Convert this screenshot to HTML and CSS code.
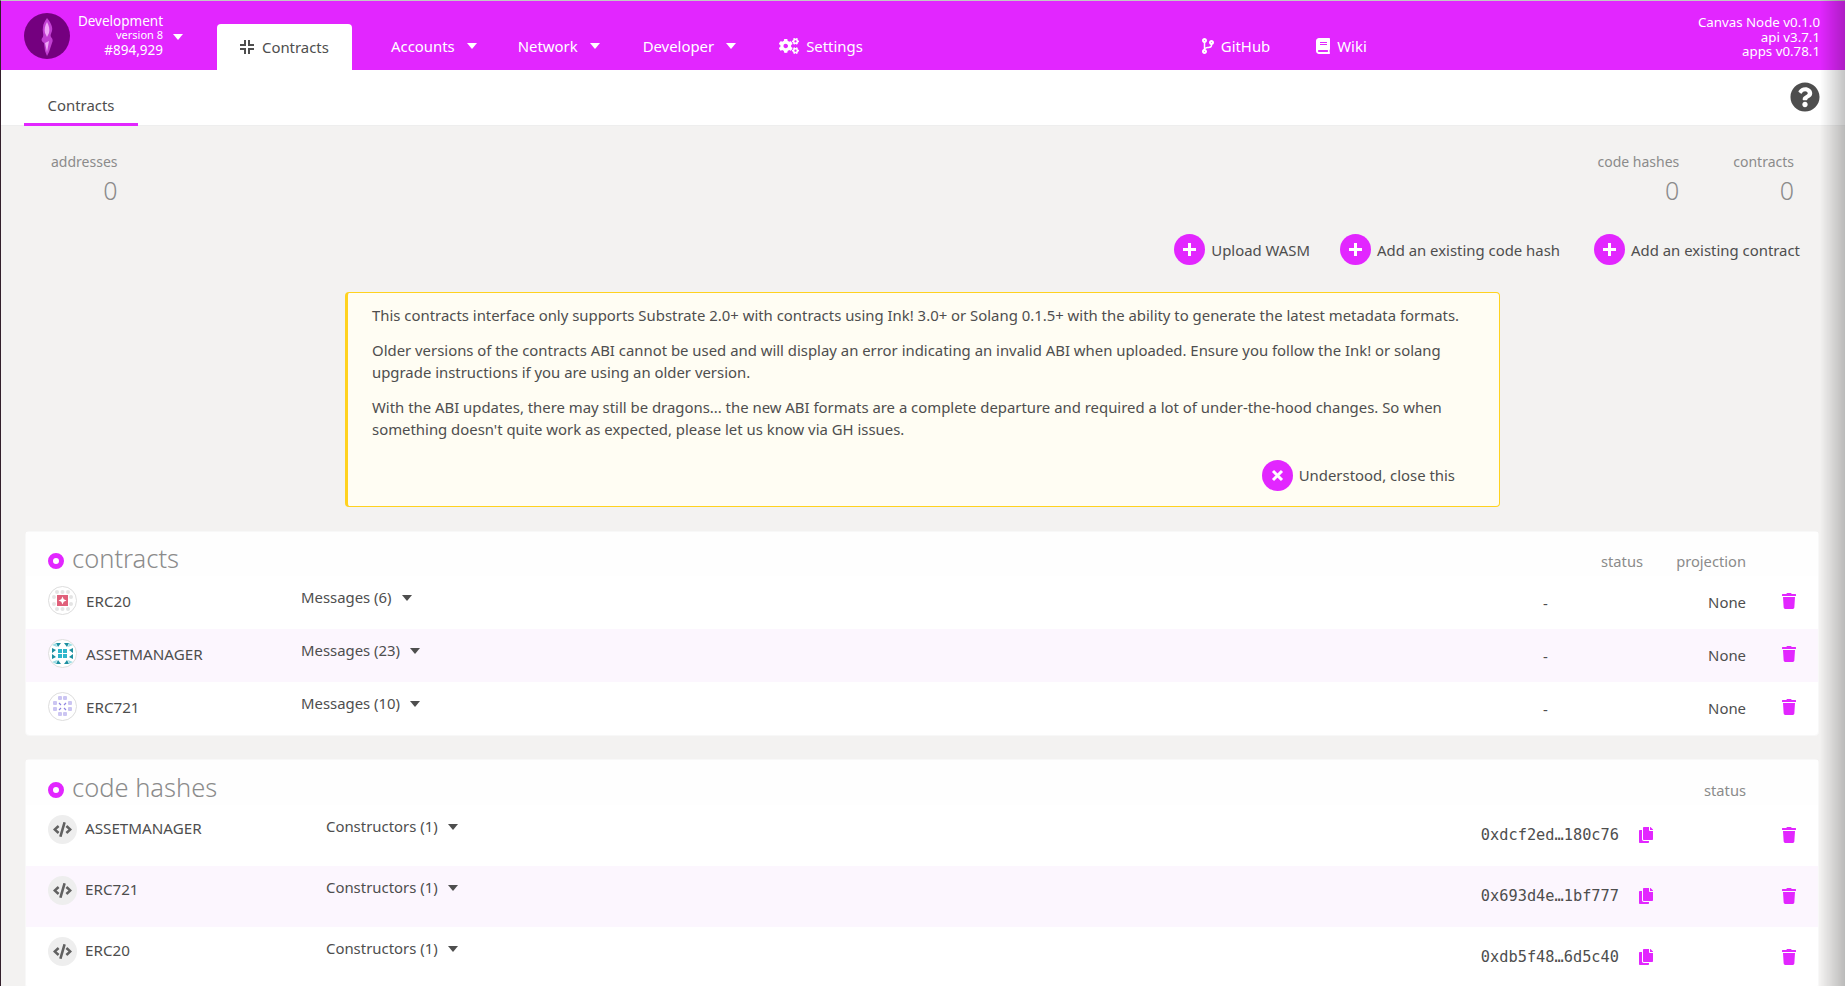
FILE: index.html
```html
<!DOCTYPE html>
<html>
<head>
    <title>Contracts</title>
    <link rel="stylesheet" href="styles.css">
</head>
<body>
    <svg class="icon-defs" xmlns="http://www.w3.org/2000/svg">
        <symbol id="i-trash" viewBox="0 0 448 512"><path d="M432 32H312l-9.4-18.7A24 24 0 0 0 281.1 0H166.8a23.72 23.72 0 0 0-21.4 13.3L136 32H16A16 16 0 0 0 0 48v32a16 16 0 0 0 16 16h416a16 16 0 0 0 16-16V48a16 16 0 0 0-16-16zM53.2 467a48 48 0 0 0 47.9 45h245.8a48 48 0 0 0 47.9-45L416 128H32z"/></symbol>
        <symbol id="i-copy" viewBox="0 0 448 512"><path d="M320 448v40c0 13.255-10.745 24-24 24H24c-13.255 0-24-10.745-24-24V120c0-13.255 10.745-24 24-24h72v296c0 30.879 25.121 56 56 56h168zm0-344V0H152c-13.255 0-24 10.745-24 24v368c0 13.255 10.745 24 24 24h272c13.255 0 24-10.745 24-24V128H344c-13.2 0-24-10.8-24-24zm120.971-31.029L375.029 7.029A24 24 0 0 0 358.059 0H352v96h96v-6.059a24 24 0 0 0-7.029-16.97z"/></symbol>
        <symbol id="i-code" viewBox="0 0 640 512"><path d="M278.9 511.5l-61-17.7c-6.4-1.8-10-8.5-8.2-14.9L346.2 8.7c1.8-6.4 8.5-10 14.9-8.2l61 17.7c6.4 1.8 10 8.5 8.2 14.9L293.8 503.3c-1.9 6.4-8.5 10.1-14.9 8.2zm-114-112.2l43.5-46.4c4.6-4.9 4.3-12.7-.8-17.2L117 256l90.6-79.7c5.1-4.5 5.5-12.3.8-17.2l-43.5-46.4c-4.5-4.8-12.1-5.1-17-.5L3.8 247.2c-5.1 4.7-5.1 12.8 0 17.5l144.1 135.1c4.9 4.6 12.5 4.4 17-.5zm327.2.6l144.1-135.1c5.1-4.7 5.1-12.8 0-17.5L492.1 112.1c-4.8-4.5-12.4-4.3-17 .5L431.6 159c-4.6 4.9-4.3 12.7.8 17.2L523 256l-90.6 79.7c-5.1 4.5-5.5 12.3-.8 17.2l43.5 46.4c4.5 4.9 12.1 5.1 17 .6z"/></symbol>
    </svg>

    <header class="topbar">
        <div class="chain">
            <svg class="chain-logo" viewBox="0 0 46 46">
                <circle cx="23" cy="23" r="23" fill="#74007f"/>
                <path d="M23 5c4 5 6 9 5 13-1 3-2 4-1 6 2 2 2 4 1 6l-3 9-2 4-2-5-1-8c-3-2-3-4-1-6 1-3-1-6 0-10 0-3 2-6 4-9z" fill="#c13fd2"/>
                <path d="M23 9c2 4 3 7 2 11l-2 4-2-4c-1-4 0-7 2-11zM21 30l4-2-2 11z" fill="#f0a8f8"/>
            </svg>
            <div class="chain-info">
                <div>Development</div>
                <div class="chain-version">version 8</div>
                <div>#894,929</div>
            </div>
            <span class="caret caret-light chain-caret"></span>
        </div>

        <nav class="nav">
            <a class="nav-tab">
                <svg class="nav-tab-icon" viewBox="0 0 14 14"><path d="M0 5h5V0M9 0v5h5M14 9H9v5M5 14V9H0" fill="none" stroke="#4e4e4e" stroke-width="2"/></svg>
                Contracts
            </a>
            <a class="nav-item nav-accounts">Accounts<span class="caret caret-light"></span></a>
            <a class="nav-item nav-network">Network<span class="caret caret-light"></span></a>
            <a class="nav-item nav-developer">Developer<span class="caret caret-light"></span></a>
            <a class="nav-item nav-settings">
                <svg class="nav-icon cogs" viewBox="0 0 640 512"><path d="M512.1 191l-8.2 14.3c-3 5.3-9.4 7.5-15.1 5.4-11.8-4.4-22.6-10.7-32.1-18.6-4.6-3.8-5.8-10.5-2.8-15.7l8.2-14.3c-6.9-8-12.3-17.3-15.9-27.4h-16.5c-6 0-11.2-4.3-12.2-10.3-2-12-2.1-24.6 0-37.1 1-6 6.2-10.4 12.2-10.4h16.5c3.6-10.1 9-19.4 15.9-27.4l-8.2-14.3c-3-5.2-1.9-11.9 2.8-15.7 9.5-7.9 20.4-14.2 32.1-18.6 5.7-2.1 12.1.1 15.1 5.4l8.2 14.3c10.5-1.9 21.2-1.9 31.7 0L552 6.3c3-5.3 9.4-7.5 15.1-5.4 11.8 4.4 22.6 10.7 32.1 18.6 4.6 3.8 5.8 10.5 2.8 15.7l-8.2 14.3c6.9 8 12.3 17.3 15.9 27.4h16.5c6 0 11.2 4.3 12.2 10.3 2 12 2.1 24.6 0 37.1-1 6-6.2 10.4-12.2 10.4h-16.5c-3.6 10.1-9 19.4-15.9 27.4l8.2 14.3c3 5.2 1.9 11.9-2.8 15.7-9.5 7.9-20.4 14.2-32.1 18.6-5.7 2.1-12.1-.1-15.1-5.4l-8.2-14.3c-10.4 1.9-21.2 1.9-31.7 0zm-10.5-58.8c38.5 29.6 82.4-14.3 52.8-52.8-38.5-29.7-82.4 14.3-52.8 52.8zM386.3 286.1l33.7 16.8c10.1 5.8 14.5 18.1 10.5 29.1-8.9 24.2-26.4 46.4-42.6 65.8-7.4 8.9-20.2 11.1-30.3 5.3l-29.1-16.8c-16 13.7-34.6 24.6-54.9 31.7v33.6c0 11.6-8.3 21.6-19.7 23.6-24.6 4.2-50.4 4.4-75.9 0-11.5-2-20-11.9-20-23.6V418c-20.3-7.2-38.9-18-54.9-31.7L74 403c-10 5.8-22.9 3.6-30.3-5.3-16.2-19.4-33.3-41.6-42.2-65.7-4-10.9.4-23.2 10.5-29.1l33.3-16.8c-3.9-20.9-3.9-42.4 0-63.4L12 205.8c-10.1-5.8-14.6-18.1-10.5-29 8.9-24.2 26-46.4 42.2-65.8 7.4-8.9 20.2-11.1 30.3-5.3l29.1 16.8c16-13.7 34.6-24.6 54.9-31.7V57.1c0-11.5 8.2-21.5 19.6-23.5 24.6-4.2 50.5-4.4 76-.1 11.5 2 20 11.9 20 23.6v33.6c20.3 7.2 38.9 18 54.9 31.7l29.1-16.8c10-5.8 22.9-3.6 30.3 5.3 16.2 19.4 33.2 41.6 42.1 65.8 4 10.9.1 23.2-10 29.1l-33.7 16.8c3.9 21 3.9 42.5 0 63.5zm-117.6 21.1c59.2-77-28.7-164.9-105.7-105.7-59.2 77 28.7 164.9 105.7 105.7zm243.4 182.7l-8.2 14.3c-3 5.3-9.4 7.5-15.1 5.4-11.8-4.4-22.6-10.7-32.1-18.6-4.6-3.8-5.8-10.5-2.8-15.7l8.2-14.3c-6.9-8-12.3-17.3-15.9-27.4h-16.5c-6 0-11.2-4.3-12.2-10.3-2-12-2.1-24.6 0-37.1 1-6 6.2-10.4 12.2-10.4h16.5c3.6-10.1 9-19.4 15.9-27.4l-8.2-14.3c-3-5.2-1.9-11.9 2.8-15.7 9.5-7.9 20.4-14.2 32.1-18.6 5.7-2.1 12.1.1 15.1 5.4l8.2 14.3c10.5-1.9 21.2-1.9 31.7 0l8.2-14.3c3-5.3 9.4-7.5 15.1-5.4 11.8 4.4 22.6 10.7 32.1 18.6 4.6 3.8 5.8 10.5 2.8 15.7l-8.2 14.3c6.9 8 12.3 17.3 15.9 27.4h16.5c6 0 11.2 4.3 12.2 10.3 2 12 2.1 24.6 0 37.1-1 6-6.2 10.4-12.2 10.4h-16.5c-3.6 10.1-9 19.4-15.9 27.4l8.2 14.3c3 5.2 1.9 11.9-2.8 15.7-9.5 7.9-20.4 14.2-32.1 18.6-5.7 2.1-12.1-.1-15.1-5.4l-8.2-14.3c-10.4 1.9-21.2 1.9-31.7 0zM501.6 431c38.5 29.6 82.4-14.3 52.8-52.8-38.5-29.6-82.4 14.3-52.8 52.8z"/></svg>
                Settings
            </a>
            <a class="nav-item nav-github">
                <svg class="nav-icon branch" viewBox="0 0 384 512"><path d="M384 144c0-44.2-35.8-80-80-80s-80 35.8-80 80c0 36.4 24.3 67.1 57.5 76.8-.6 16.1-4.2 28.5-11 36.9-15.4 19.2-49.3 22.4-85.2 25.7-28.2 2.6-57.4 5.4-81.3 16.9v-144c32.5-10.2 56-40.5 56-76.3 0-44.2-35.8-80-80-80S0 35.8 0 80c0 35.8 23.5 66.1 56 76.3v199.3C23.5 365.9 0 396.2 0 432c0 44.2 35.8 80 80 80s80-35.8 80-80c0-34-21.2-63.1-51.2-74.6 3.1-5.2 7.8-9.8 14.9-13.4 16.2-8.2 40.4-10.4 66.1-12.8 42.2-3.9 90-8.4 118.2-43.4 14-17.4 21.1-39.8 21.6-67.9 31.6-10.8 54.4-40.7 54.4-75.9zM80 64c8.8 0 16 7.2 16 16s-7.2 16-16 16-16-7.2-16-16 7.2-16 16-16zm0 384c-8.8 0-16-7.2-16-16s7.2-16 16-16 16 7.2 16 16-7.2 16-16 16zm224-320c8.8 0 16 7.2 16 16s-7.2 16-16 16-16-7.2-16-16 7.2-16 16-16z"/></svg>
                GitHub
            </a>
            <a class="nav-item nav-wiki">
                <svg class="nav-icon book" viewBox="0 0 448 512"><path d="M448 360V24c0-13.3-10.7-24-24-24H96C43 0 0 43 0 96v320c0 53 43 96 96 96h328c13.3 0 24-10.7 24-24v-16c0-7.5-3.5-14.3-8.9-18.7-4.2-15.4-4.2-59.3 0-74.7 5.4-4.3 8.9-11.1 8.9-18.6zM128 134c0-3.3 2.7-6 6-6h212c3.3 0 6 2.7 6 6v20c0 3.3-2.7 6-6 6H134c-3.3 0-6-2.7-6-6v-20zm0 64c0-3.3 2.7-6 6-6h212c3.3 0 6 2.7 6 6v20c0 3.3-2.7 6-6 6H134c-3.3 0-6-2.7-6-6v-20zm253.4 250H96c-17.7 0-32-14.3-32-32 0-17.6 14.4-32 32-32h285.4c-1.9 17.1-1.9 46.9 0 64z"/></svg>
                Wiki
            </a>
        </nav>

        <div class="versions">
            <div>Canvas Node v0.1.0</div>
            <div>api v3.7.1</div>
            <div>apps v0.78.1</div>
        </div>
    </header>

    <div class="tabbar">
        <a class="tab-active">Contracts</a>
        <svg class="help" viewBox="0 0 512 512"><path d="M504 256c0 136.997-111.043 248-248 248S8 392.997 8 256C8 119.083 119.043 8 256 8s248 111.083 248 248zM262.655 90c-54.497 0-89.255 22.957-116.549 63.758-3.536 5.286-2.353 12.415 2.715 16.258l34.699 26.31c5.205 3.947 12.621 3.008 16.665-2.122 17.864-22.658 30.113-35.797 57.303-35.797 20.429 0 45.698 13.148 45.698 32.958 0 14.976-12.363 22.667-32.534 33.976C247.128 238.528 216 254.941 216 296v4c0 6.627 5.373 12 12 12h56c6.627 0 12-5.373 12-12v-1.333c0-28.462 83.186-29.647 83.186-106.667 0-58.002-60.165-102-116.531-102zM256 338c-25.365 0-46 20.635-46 46 0 25.364 20.635 46 46 46s46-20.636 46-46c0-25.365-20.635-46-46-46z"/></svg>
    </div>

    <main class="content">
        <div class="stats">
            <div class="stat">
                <div class="stat-label">addresses</div>
                <div class="stat-value">0</div>
            </div>
            <div class="stat stat-push">
                <div class="stat-label">code hashes</div>
                <div class="stat-value">0</div>
            </div>
            <div class="stat">
                <div class="stat-label">contracts</div>
                <div class="stat-value">0</div>
            </div>
        </div>

        <div class="actions">
            <a class="action action-upload">
                <span class="action-circle"><svg viewBox="0 0 13 13"><path d="M6.5 0v13M0 6.5h13"/></svg></span>
                Upload WASM
            </a>
            <a class="action">
                <span class="action-circle"><svg viewBox="0 0 13 13"><path d="M6.5 0v13M0 6.5h13"/></svg></span>
                Add an existing code hash
            </a>
            <a class="action">
                <span class="action-circle"><svg viewBox="0 0 13 13"><path d="M6.5 0v13M0 6.5h13"/></svg></span>
                Add an existing contract
            </a>
        </div>

        <div class="notice">
            <p>This contracts interface only supports Substrate 2.0+ with contracts using Ink! 3.0+ or Solang 0.1.5+ with the ability to generate the latest metadata formats.</p>
            <p>Older versions of the contracts ABI cannot be used and will display an error indicating an invalid ABI when uploaded. Ensure you follow the Ink! or solang upgrade instructions if you are using an older version.</p>
            <p>With the ABI updates, there may still be dragons... the new ABI formats are a complete departure and required a lot of under-the-hood changes. So when something doesn't quite work as expected, please let us know via GH issues.</p>
            <div class="notice-actions">
                <a class="action">
                    <span class="action-circle"><svg viewBox="0 0 13 13"><path d="M2 2l9 9M11 2l-9 9"/></svg></span>
                    Understood, close this
                </a>
            </div>
        </div>

        <section class="card">
            <div class="contract-grid card-head">
                <h1 class="card-title"><span class="dot"></span>contracts</h1>
                <div class="head-label head-status">status</div>
                <div class="head-label head-projection">projection</div>
            </div>
            <div class="contract-grid row">
                <div class="row-name">
                    <svg class="identicon" viewBox="0 0 29 29">
                        <circle cx="14.5" cy="14.5" r="14" fill="#fff" stroke="#ddd"/>
                        <g fill="#e4e4e4"><circle cx="9" cy="6" r="2"/><circle cx="14.5" cy="6" r="2"/><circle cx="20" cy="6" r="2"/><circle cx="6" cy="11" r="2"/><circle cx="23" cy="11" r="2"/><circle cx="6" cy="18" r="2"/><circle cx="23" cy="18" r="2"/><circle cx="9" cy="23" r="2"/><circle cx="14.5" cy="23" r="2"/><circle cx="20" cy="23" r="2"/></g>
                        <rect x="9" y="9" width="11" height="11" fill="#e0607a"/>
                        <path d="M14.5 10.5l1.2 2.8 2.8 1.2-2.8 1.2-1.2 2.8-1.2-2.8-2.8-1.2 2.8-1.2z" fill="#fff"/>
                    </svg>
                    ERC20
                </div>
                <div class="row-msgs">Messages (6)<span class="caret"></span></div>
                <div class="row-status">-</div>
                <div class="row-projection">None</div>
                <svg class="trash"><use href="#i-trash"/></svg>
            </div>
            <div class="contract-grid row row-even">
                <div class="row-name">
                    <svg class="identicon" viewBox="0 0 29 29">
                        <circle cx="14.5" cy="14.5" r="14" fill="#fff" stroke="#ddd"/>
                        <g fill="#1d8fa0"><path d="M8 4h5l-3 4zM21 4h-5l3 4zM4 9v5l4-3zM25 9v5l-4-3zM4 20v-5l4 3zM25 20v-5l-4 3zM8 25h5l-3-4zM21 25h-5l3-4z"/></g>
                        <g fill="#9bdbe3"><path d="M4 6l4-2 1 4zM25 6l-4-2-1 4zM4 23l4 2 1-4zM25 23l-4 2-1-4z"/></g>
                        <g fill="#2fb6cc"><rect x="10" y="10" width="4" height="4"/><rect x="15" y="10" width="4" height="4"/><rect x="10" y="15" width="4" height="4"/><rect x="15" y="15" width="4" height="4"/></g>
                    </svg>
                    ASSETMANAGER
                </div>
                <div class="row-msgs">Messages (23)<span class="caret"></span></div>
                <div class="row-status">-</div>
                <div class="row-projection">None</div>
                <svg class="trash"><use href="#i-trash"/></svg>
            </div>
            <div class="contract-grid row">
                <div class="row-name">
                    <svg class="identicon" viewBox="0 0 29 29">
                        <circle cx="14.5" cy="14.5" r="14" fill="#fff" stroke="#ddd"/>
                        <g fill="#cbc5f2"><rect x="10" y="4" width="4" height="4" rx="1"/><rect x="15" y="4" width="4" height="4" rx="1"/><rect x="5" y="9" width="4" height="4" rx="1"/><rect x="20" y="9" width="4" height="4" rx="1"/><rect x="5" y="15" width="4" height="4" rx="1"/><rect x="20" y="15" width="4" height="4" rx="1"/><rect x="10" y="20" width="4" height="4" rx="1"/><rect x="15" y="20" width="4" height="4" rx="1"/></g>
                        <path d="M11 11l2 2M18 11l-2 2M11 18l2-2M18 18l-2-2" stroke="#8f85e0" stroke-width="1.2"/>
                    </svg>
                    ERC721
                </div>
                <div class="row-msgs">Messages (10)<span class="caret"></span></div>
                <div class="row-status">-</div>
                <div class="row-projection">None</div>
                <svg class="trash"><use href="#i-trash"/></svg>
            </div>
        </section>

        <section class="card card-code">
            <div class="card-head code-head">
                <h1 class="card-title"><span class="dot"></span>code hashes</h1>
                <div class="head-label">status</div>
            </div>
            <div class="code-row">
                <div class="code-name"><span class="code-badge"><svg><use href="#i-code"/></svg></span>ASSETMANAGER</div>
                <div class="code-msgs">Constructors (1)<span class="caret"></span></div>
                <div class="code-hash">0xdcf2ed…180c76</div>
                <svg class="copy"><use href="#i-copy"/></svg>
                <svg class="trash"><use href="#i-trash"/></svg>
            </div>
            <div class="code-row row-even">
                <div class="code-name"><span class="code-badge"><svg><use href="#i-code"/></svg></span>ERC721</div>
                <div class="code-msgs">Constructors (1)<span class="caret"></span></div>
                <div class="code-hash">0x693d4e…1bf777</div>
                <svg class="copy"><use href="#i-copy"/></svg>
                <svg class="trash"><use href="#i-trash"/></svg>
            </div>
            <div class="code-row">
                <div class="code-name"><span class="code-badge"><svg><use href="#i-code"/></svg></span>ERC20</div>
                <div class="code-msgs">Constructors (1)<span class="caret"></span></div>
                <div class="code-hash">0xdb5f48…6d5c40</div>
                <svg class="copy"><use href="#i-copy"/></svg>
                <svg class="trash"><use href="#i-trash"/></svg>
            </div>
        </section>
    </main>

    <div class="side-shadow"></div>
</body>
</html>
```

FILE: styles.css
```css
* {
    box-sizing: border-box;
}

html {
    height: 100%;
    overflow: hidden;
}

body {
    margin: 0;
    height: 986px;
    overflow: hidden;
    border-top: 1px solid #c2c8c4;
    border-left: 1px solid #33202c;
    background-color: #f3f2f1;
    color: #4e4e4e;
    font-family: "Noto Sans", sans-serif;
    font-size: 14.9px;
}

.icon-defs {
    display: none;
}

/* top bar */
.topbar {
    display: flex;
    height: 69px;
    background-color: #e226ff;
    color: #fff;
}

.chain {
    display: flex;
    align-items: center;
    width: 216px;
    padding-left: 23px;
}

.chain-logo {
    width: 46px;
    height: 46px;
}

.chain-info {
    width: 93px;
    text-align: right;
    font-size: 13.5px;
    line-height: 14.5px;
}

.chain-version {
    font-size: 11px;
}

.chain-caret {
    margin-left: 12px;
    margin-top: 2px;
}

.caret {
    display: inline-block;
    width: 0;
    height: 0;
    margin-left: 10px;
    vertical-align: 2px;
    border-left: 5px solid transparent;
    border-right: 5px solid transparent;
    border-top: 6px solid #4e4e4e;
}

.caret-light {
    border-top-color: #fff;
}

.nav {
    display: flex;
    flex: 1;
    align-items: flex-end;
}

.nav-tab {
    display: flex;
    align-items: center;
    width: 135px;
    height: 46px;
    padding-left: 23px;
    padding-bottom: 1px;
    background-color: #fff;
    border-radius: 4px 4px 0 0;
    color: #4e4e4e;
}

.nav-tab-icon {
    width: 14px;
    height: 14px;
    margin-right: 8px;
}

.nav-item {
    display: flex;
    align-items: center;
    height: 46px;
    padding-bottom: 2px;
}

.nav-item .caret {
    margin-left: 12px;
}

.nav-accounts { margin-left: 39px; }
.nav-network { margin-left: 41px; }
.nav-developer { margin-left: 43px; }
.nav-settings { margin-left: 43px; }
.nav-github { margin-left: 339px; }
.nav-wiki { margin-left: 46px; }

.nav-icon {
    height: 16px;
    margin-right: 7px;
    fill: #fff;
}

.cogs { width: 20px; }
.branch { width: 12px; }
.book { width: 14px; }

.versions {
    width: 200px;
    padding: 14px 25px 0 0;
    text-align: right;
    font-size: 13.3px;
    line-height: 14.5px;
}

/* sub tabs */
.tabbar {
    display: flex;
    justify-content: space-between;
    align-items: center;
    height: 56px;
    padding: 0 25px 0 23px;
    background-color: #fff;
    border-bottom: 1px solid #eeeeee;
}

.tab-active {
    width: 114px;
    height: 56px;
    padding-top: 25px;
    text-align: center;
    line-height: 20px;
    border-bottom: 3px solid #e226ff;
    color: #4e4e4e;
}

.help {
    width: 30px;
    height: 30px;
    margin-top: -2px;
    fill: #4e4e4e;
}

/* stats */
.stats {
    display: flex;
    gap: 54px;
    padding: 26px 51px 0 50px;
}

.stat {
    text-align: right;
}

.stat-push {
    margin-left: auto;
}

.stat-label {
    color: #8b8b8b;
    font-size: 14px;
    line-height: 20px;
}

.stat-value {
    margin-top: 3px;
    color: #8b8b8b;
    font-size: 25px;
    font-weight: 300;
    line-height: 30px;
}

/* buttons */
.actions {
    display: flex;
    justify-content: flex-end;
    gap: 34px;
    padding-right: 45px;
    margin-top: 29px;
}

.action {
    display: flex;
    align-items: center;
    gap: 6px;
    color: #4e4e4e;
}

.action-upload {
    margin-right: -4px;
}

.action-circle {
    display: flex;
    align-items: center;
    justify-content: center;
    width: 31px;
    height: 31px;
    border-radius: 50%;
    background-color: #e226ff;
}

.action-circle svg {
    width: 13px;
    height: 13px;
    fill: none;
    stroke: #fff;
    stroke-width: 3;
}

/* notice */
.notice {
    width: 1155px;
    height: 215px;
    margin: 27px 0 0 344px;
    padding: 12px 30px 0 24px;
    background-color: #fffdf3;
    border: 1px solid #ffd21f;
    border-left-width: 3px;
    border-radius: 4px;
    line-height: 21.4px;
}

.notice p {
    margin: 0 0 14px;
}

.notice-actions {
    display: flex;
    justify-content: flex-end;
    margin-top: 20px;
    padding-right: 14px;
}

/* tables */
.card {
    margin: 24px 26px 0 24px;
    background-color: #fff;
    border: 1px solid #f8f8f8;
    border-radius: 4px;
}

.card-code {
    margin-top: 23px;
}

.card-head {
    height: 44px;
    padding-left: 22px;
    background-color: #fefefe;
}

.card-title {
    display: flex;
    align-items: center;
    height: 44px;
    margin: 0;
    padding-top: 8px;
    color: #8b8b8b;
    font-size: 25.5px;
    font-weight: 300;
    line-height: 36px;
}

.dot {
    flex-shrink: 0;
    width: 16px;
    height: 16px;
    margin: 6px 8px 0 0;
    border: 5px solid #e226ff;
    border-radius: 50%;
    background-color: #fff;
}

.head-label {
    color: #8b8b8b;
    padding-top: 19px;
    line-height: 20px;
    text-align: right;
    font-size: 14.7px;
}

.head-status {
    grid-column: 3;
}

.head-projection {
    grid-column: 4;
}

.contract-grid {
    display: grid;
    grid-template-columns: 253px 1fr 100px 103px 72px;
    padding-left: 22px;
}

.row {
    height: 53px;
    align-items: center;
    padding-bottom: 4px;
}

.row-even {
    background-color: #fcf6fe;
}

.row-name {
    display: flex;
    align-items: center;
    gap: 9px;
    font-size: 15.2px;
}

.identicon {
    flex-shrink: 0;
    width: 29px;
    height: 29px;
}

.row-msgs {
    margin-top: -8px;
}

.row-status {
    margin-top: 4px;
}

.row-projection {
    margin-top: 3px;
    text-align: right;
}

.trash {
    justify-self: end;
    width: 14px;
    height: 16px;
    margin-right: 22px;
    fill: #e226ff;
}

.code-head {
    display: flex;
    justify-content: space-between;
    height: 45px;
    padding-right: 72px;
}

.code-head .card-title {
    padding-top: 10px;
    line-height: 34px;
}

.code-head .head-label {
    padding-top: 20px;
}

.code-row {
    display: flex;
    align-items: center;
    height: 61px;
    padding-left: 22px;
    padding-bottom: 2px;
}

.code-name {
    display: flex;
    align-items: center;
    width: 278px;
    margin-bottom: 13px;
    font-size: 15.2px;
}

.code-badge {
    display: flex;
    align-items: center;
    justify-content: center;
    width: 29px;
    height: 29px;
    margin-top: 2px;
    margin-right: 8px;
    border-radius: 50%;
    background-color: #eeeeee;
}

.code-badge svg {
    width: 19px;
    height: 15px;
    fill: #616161;
}

.code-msgs {
    flex: 1;
    margin-bottom: 17px;
}

.code-hash {
    color: #4e4e4e;
    font-family: "DejaVu Sans Mono", monospace;
    font-size: 15.3px;
}

.copy {
    width: 14px;
    height: 16px;
    margin-left: 20px;
    margin-right: 129px;
    fill: #e226ff;
}

.side-shadow {
    position: fixed;
    top: 0;
    right: 0;
    bottom: 0;
    width: 25px;
    background: linear-gradient(to right, rgba(0, 0, 0, 0), rgba(0, 0, 0, 0.23));
    pointer-events: none;
}
```
